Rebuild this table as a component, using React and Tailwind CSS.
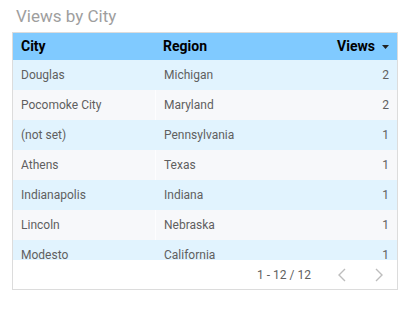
const rows = [
  { city: 'Douglas', region: 'Michigan', views: 2 },
  { city: 'Pocomoke City', region: 'Maryland', views: 2 },
  { city: '(not set)', region: 'Pennsylvania', views: 1 },
  { city: 'Athens', region: 'Texas', views: 1 },
  { city: 'Indianapolis', region: 'Indiana', views: 1 },
  { city: 'Lincoln', region: 'Nebraska', views: 1 },
  { city: 'Modesto', region: 'California', views: 1 },
];

function Chevron({ dir }) {
  return (
    <svg width="10" height="14" viewBox="0 0 10 14" fill="none" stroke="#bdbdbd" strokeWidth="1.4">
      {dir === 'left' ? <path d="M8 1 L2 7 L8 13" /> : <path d="M2 1 L8 7 L2 13" />}
    </svg>
  );
}

export default function App() {
  return (
    <div className="w-[414px] h-[321px] bg-white pl-[12px] pt-[3px] font-['Roboto',sans-serif]">
      <div className="pl-[4px] h-[29px] text-[17px] leading-[26px] text-[#9e9e9e]">Views by City</div>

      <div className="w-[386px] border border-[#dcdcdc]">
        <div className="grid grid-cols-[142px_1fr_auto] h-[27px] bg-[#80caff] items-center text-[14px] font-bold text-black">
          <div className="pl-2">City</div>
          <div className="pl-2">Region</div>
          <div className="flex items-center pr-[8px]">
            Views
            <svg className="ml-[7px]" width="7" height="4" viewBox="0 0 7 4">
              <path d="M0 0 L7 0 L3.5 4 Z" fill="#222" />
            </svg>
          </div>
        </div>

        <div className="h-[200px] overflow-hidden">
          {rows.map((r, i) => (
            <div
              key={r.city}
              className={`grid grid-cols-[142px_1fr_auto] h-[30px] items-center text-[12px] text-[#5f5f5f] ${
                i % 2 === 0 ? 'bg-[#e1f3fe]' : 'bg-[#f7f8fa]'
              }`}
            >
              <div className="pl-2">{r.city}</div>
              <div
                className={`pl-2 h-full flex items-center border-l ${
                  i % 2 === 0 ? 'border-[#e1f3fe]' : 'border-[#fdfdfe]'
                }`}
              >
                {r.region}
              </div>
              <div className="pr-[8px] text-right">{r.views}</div>
            </div>
          ))}
        </div>

        <div className="h-[29px] flex items-center justify-end text-[12px] text-[#5f5f5f] pr-[13px]">
          <span className="mr-[26px]">1 - 12 / 12</span>
          <Chevron dir="left" />
          <span className="w-[27px]" />
          <Chevron dir="right" />
        </div>
      </div>
    </div>
  );
}
